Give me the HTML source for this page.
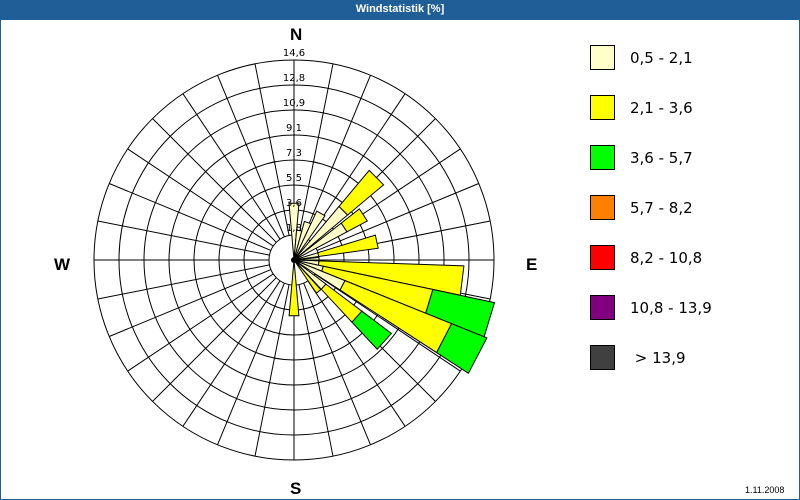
<!DOCTYPE html>
<html><head><meta charset="utf-8"><style>
body{margin:0;width:800px;height:500px;overflow:hidden;background:#fff;font-family:"Liberation Sans","DejaVu Sans",sans-serif}
#frame{position:absolute;left:0;top:0;width:798px;height:499px;border:1px solid #1f5e96;border-top:none}
#title{position:absolute;left:0;top:0;width:800px;height:20px;background:#1f5e96;color:#fff;font-size:11px;font-weight:bold;text-align:center;line-height:19px}
.lg{position:absolute;left:590px;width:23px;height:23px;border:1px solid #000}
.lt{position:absolute;left:630px;color:#000;font-family:"DejaVu Sans",sans-serif;font-size:15px}
.d{position:absolute;font-size:17px;font-weight:bold}
</style></head><body>
<div id="frame"></div>
<div id="title">Windstatistik [%]</div>
<svg id="s" width="800" height="500" style="position:absolute;left:0;top:0"></svg>
<div class="d" style="left:290px;top:25px">N</div>
<div class="d" style="left:54px;top:255px">W</div>
<div class="d" style="left:526px;top:255px">E</div>
<div class="d" style="left:290px;top:479px">S</div>
<div style="position:absolute;left:745px;top:485px;font-size:9px">1.11.2008</div>
<div class="lg" style="top:45px;background:#ffffc8"></div><div class="lt" style="top:49px">0,5 - 2,1</div>
<div class="lg" style="top:95px;background:#ffff00"></div><div class="lt" style="top:99px">2,1 - 3,6</div>
<div class="lg" style="top:145px;background:#00ff00"></div><div class="lt" style="top:149px">3,6 - 5,7</div>
<div class="lg" style="top:195px;background:#ff8000"></div><div class="lt" style="top:199px">5,7 - 8,2</div>
<div class="lg" style="top:245px;background:#ff0000"></div><div class="lt" style="top:249px">8,2 - 10,8</div>
<div class="lg" style="top:295px;background:#800080"></div><div class="lt" style="top:299px">10,8 - 13,9</div>
<div class="lg" style="top:345px;background:#404040"></div><div class="lt" style="top:349px">&nbsp;&gt; 13,9</div>
<script>
var cx=294,cy=260,h='';
function P(a,r){var t=(a-90)*Math.PI/180;return (cx+r*Math.cos(t)).toFixed(1)+','+(cy+r*Math.sin(t)).toFixed(1);}
for(var k=1;k<=8;k++)h+='<circle cx="'+cx+'" cy="'+cy+'" r="'+(k*25)+'" fill="none" stroke="#000" stroke-width="1"/>';
for(var a=0;a<360;a+=11.25){var p=P(a,25).split(','),q=P(a,200).split(',');h+='<line x1="'+p[0]+'" y1="'+p[1]+'" x2="'+q[0]+'" y2="'+q[1]+'" stroke="#000"/>';}
var Y='#ffff00',L='#ffffc8',G='#00ff00';
var W=[[355,5,[[0,57,L]]],[5,15,[[0,30,L]]],[15,25,[[0,40,L]]],[25,35,[[0,54,L]]],[40,50,[[0,70,L],[70,117,Y]]],[52,62,[[0,60,L],[60,83,Y]]],[73,82,[[0,25,L],[25,85,Y]]],[84,90,[[0,25,L]]],
[92,102,[[0,25,L],[25,170,Y]]],[102,112,[[0,30,L],[30,142,Y],[142,205,G]]],[112,123,[[0,55,L],[55,170,Y],[170,208,G]]],[127,137,[[0,40,L],[40,85,Y],[85,122,G]]],[138,146,[[0,40,Y]]],[175,185,[[0,56,Y]]]];
W.forEach(function(w){w[2].forEach(function(s){var pts=s[0]==0?[P(w[0],0),P(w[0],s[1]),P(w[1],s[1])]:[P(w[0],s[0]),P(w[0],s[1]),P(w[1],s[1]),P(w[1],s[0])];h+='<polygon points="'+pts.join(' ')+'" fill="'+s[2]+'" stroke="#000" stroke-width="1"/>';});});
h+='<circle cx="'+cx+'" cy="'+cy+'" r="3" fill="#000"/>';
var lab=['1,8','3,6','5,5','7,3','9,1','10,9','12,8','14,6'];
for(var k=0;k<8;k++)h+='<text x="'+cx+'" y="'+(cy-25*(k+1)-4)+'" font-size="10" text-anchor="middle" font-family="DejaVu Sans,sans-serif" fill="#000">'+lab[k]+'</text>';
document.getElementById('s').innerHTML=h;
</script>
</body></html>
